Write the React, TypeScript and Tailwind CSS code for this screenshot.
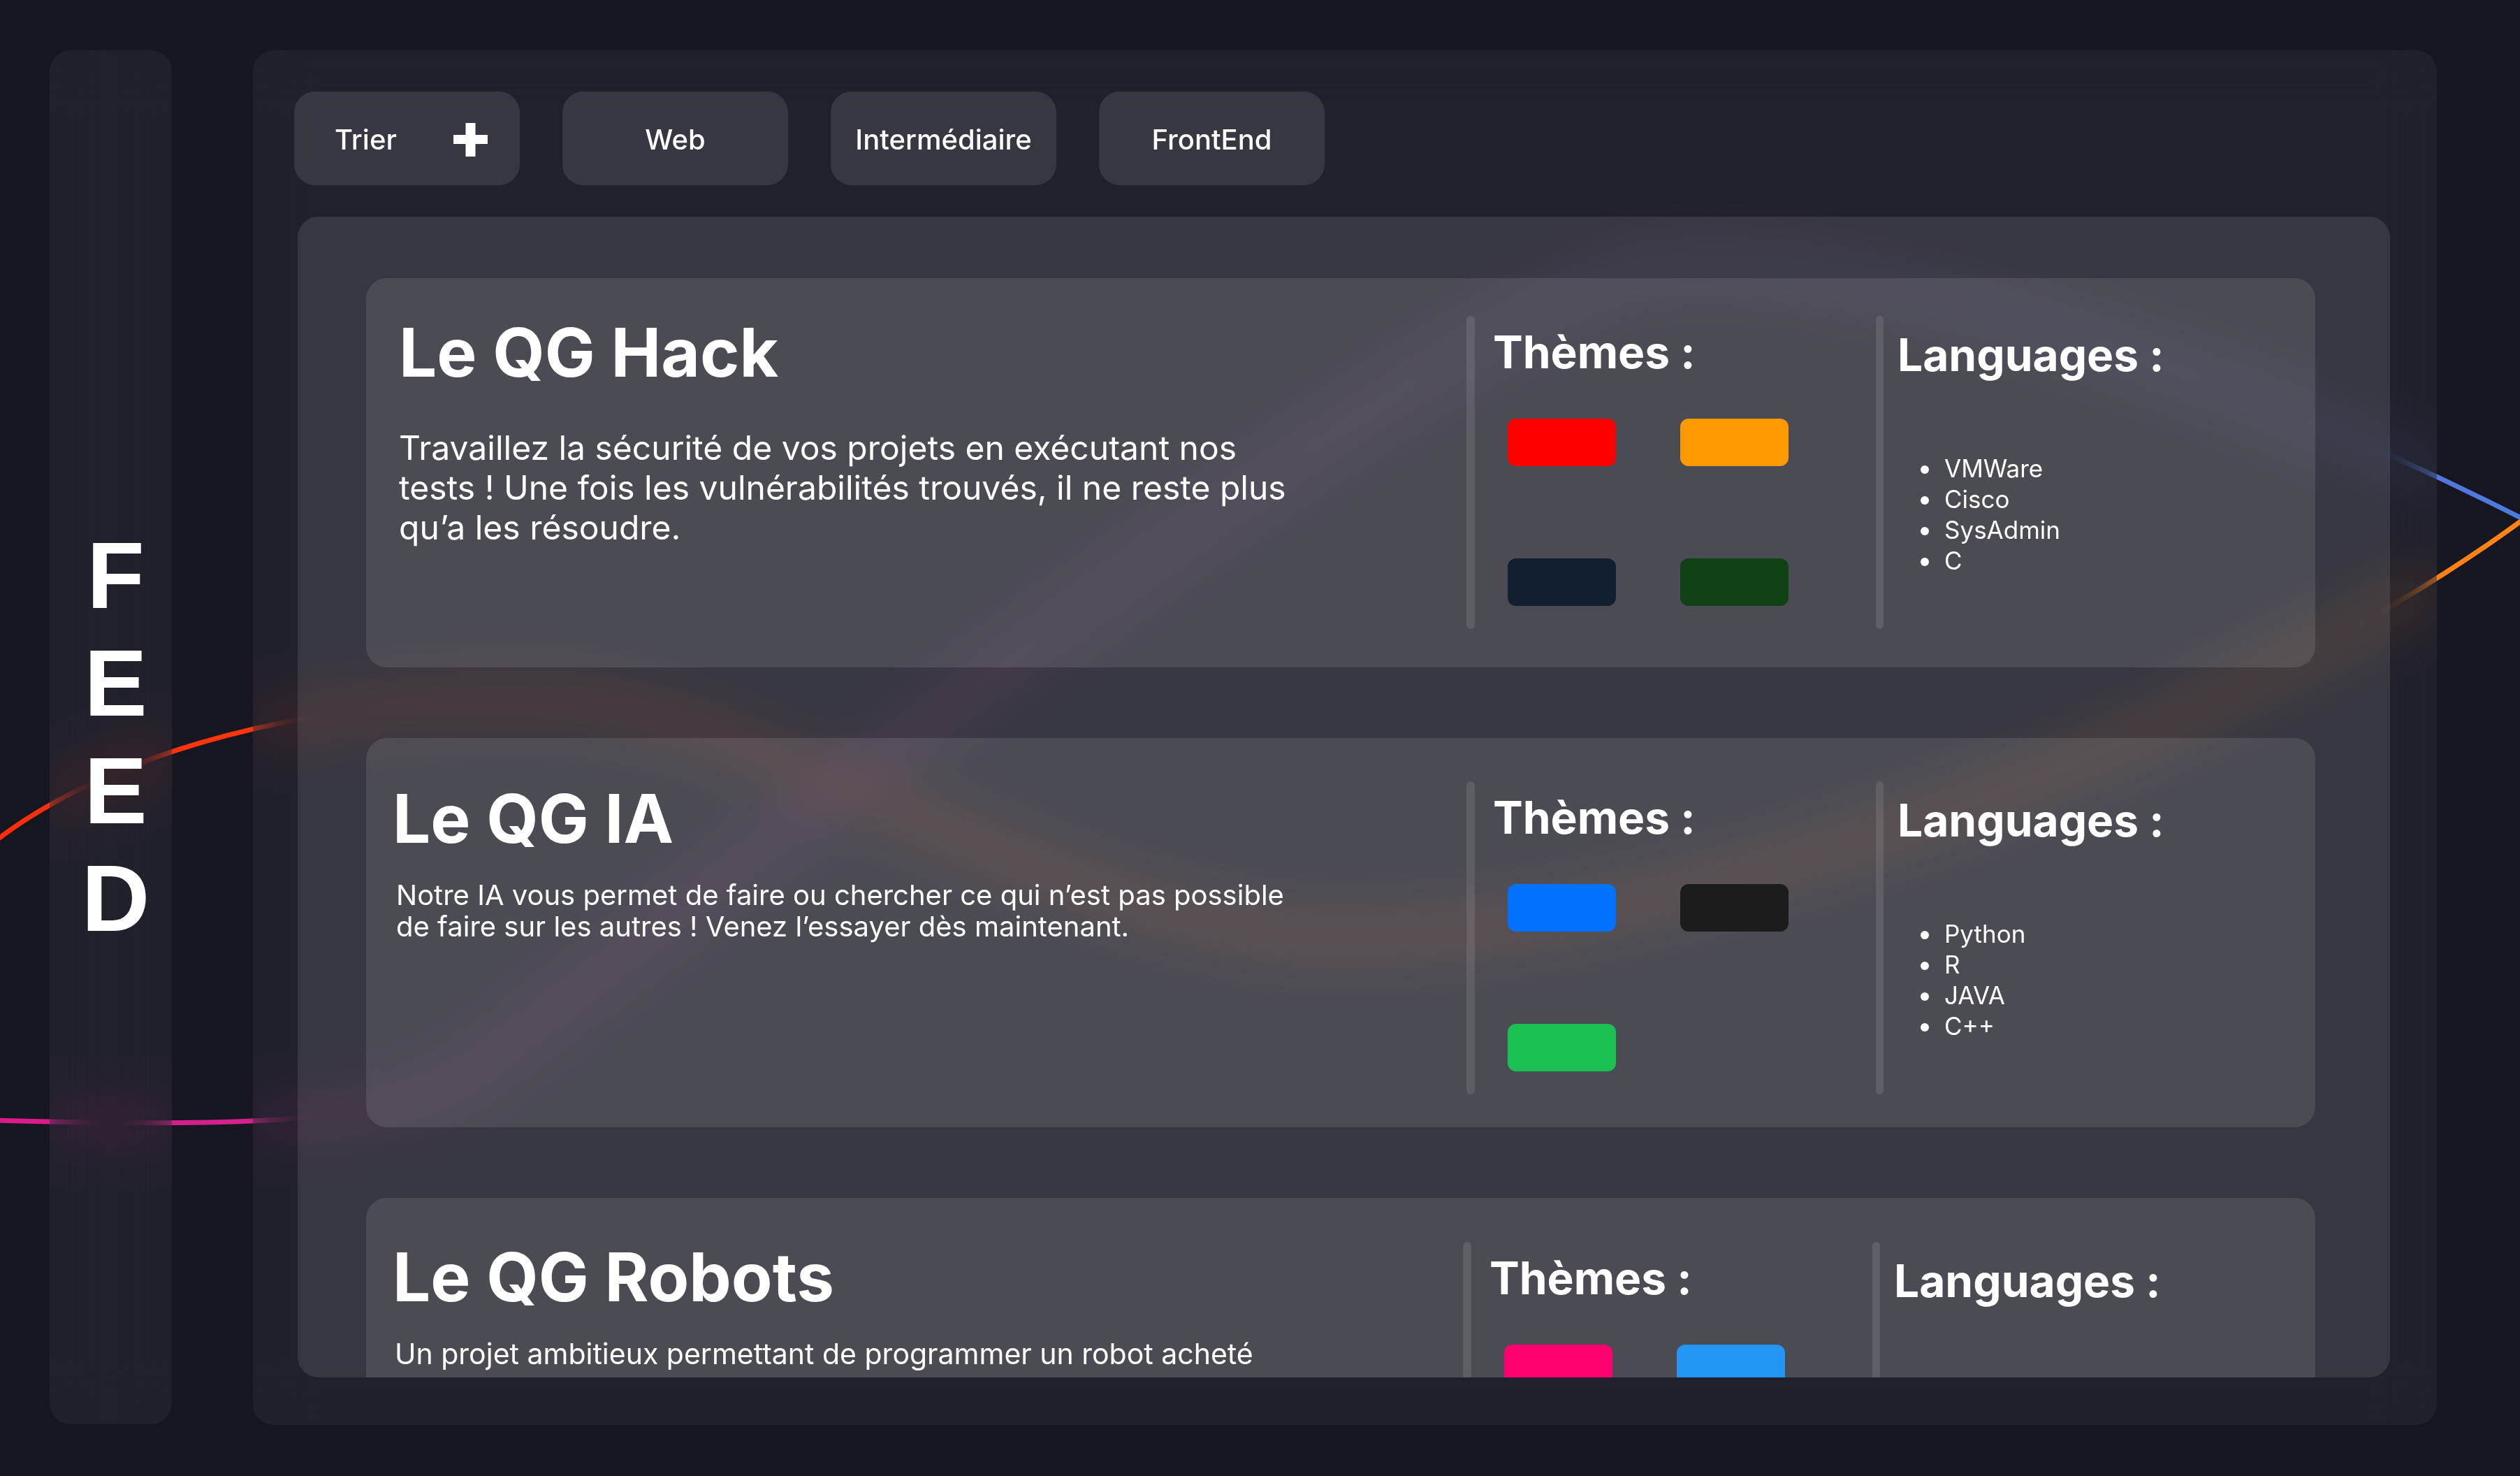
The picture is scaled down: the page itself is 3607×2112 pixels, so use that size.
import React from "react";

type CardData = {
  title: string;
  leftCls: string;
  titleCls: string;
  descCls: string;
  desc: string[];
  rightCls: string;
  swatches: string[];
  langs: string[];
};

const cards: CardData[] = [
  {
    title: "Le QG Hack",
    leftCls: "w-[1575px] pl-[47px] pt-[58px]",
    titleCls: "",
    descCls: "mt-[60px] text-[48px] leading-[57px]",
    desc: [
      "Travaillez la sécurité de vos projets en exécutant nos",
      "tests ! Une fois les vulnérabilités trouvés, il ne reste plus",
      "qu’a les résoudre.",
    ],
    rightCls: "mt-[54px]",
    swatches: ["bg-[#ff0000]", "bg-[#ff9900]", "bg-[#111f31]", "bg-[#0f4114]"],
    langs: ["VMWare", "Cisco", "SysAdmin", "C"],
  },
  {
    title: "Le QG IA",
    leftCls: "w-[1575px] pl-[38px] pt-[67px]",
    titleCls: "",
    descCls: "mt-[39px] ml-[5px] text-[40px] leading-[45px]",
    desc: [
      "Notre IA vous permet de faire ou chercher ce qui n’est pas possible",
      "de faire sur les autres ! Venez l’essayer dès maintenant.",
    ],
    rightCls: "mt-[62px]",
    swatches: ["bg-[#0072ff]", "bg-[#1c1c1c]", "bg-[#1bc152]"],
    langs: ["Python", "R", "JAVA", "C++"],
  },
  {
    title: "Le QG Robots",
    leftCls: "w-[1570px] pl-[38px] pt-[65px]",
    titleCls: "",
    descCls: "mt-[36px] ml-[3px] text-[41px] leading-[52px]",
    desc: [
      "Un projet ambitieux permettant de programmer un robot acheté",
      "ou créé par vos soins, avec une équipe à votre écoute.",
    ],
    rightCls: "mt-[63px]",
    swatches: ["bg-[#ff0070]", "bg-[#2196f3]", "bg-[#8a2be2]"],
    langs: ["Python", "C", "Arduino"],
  },
];

function PlusIcon() {
  return (
    <svg width="49" height="48" viewBox="0 0 49 48" className="shrink-0">
      <rect x="17.5" y="0" width="14" height="48" fill="#ffffff" />
      <rect x="0" y="17" width="49" height="13" fill="#ffffff" />
    </svg>
  );
}

function BackgroundLines() {
  return (
    <svg
      className="absolute left-0 top-0"
      width="3607"
      height="2112"
      viewBox="0 0 3607 2112"
      fill="none"
    >
      <defs>
        <linearGradient id="gOrange" gradientUnits="userSpaceOnUse" x1="0" y1="0" x2="3607" y2="0">
          <stop offset="0" stopColor="#ff2d0a" />
          <stop offset="0.5" stopColor="#ff5a10" />
          <stop offset="1" stopColor="#ff8414" />
        </linearGradient>
        <linearGradient id="gPink" gradientUnits="userSpaceOnUse" x1="0" y1="0" x2="3607" y2="0">
          <stop offset="0" stopColor="#dc1a88" />
          <stop offset="0.4" stopColor="#b5399f" />
          <stop offset="0.65" stopColor="#8a55c4" />
          <stop offset="1" stopColor="#4d7ade" />
        </linearGradient>
      </defs>
      <path
        d="M -10 1206 C 150 1080, 450 990, 800 1005 C 1100 1010, 1500 1330, 1900 1340 C 2400 1350, 3200 1050, 3620 737"
        stroke="url(#gOrange)"
        strokeWidth="7"
      />
      <path
        d="M -10 1603 C 300 1612, 560 1610, 660 1545 C 960 1320, 1900 560, 2300 400 C 2500 320, 3100 480, 3620 747"
        stroke="url(#gPink)"
        strokeWidth="7"
      />
    </svg>
  );
}

function FilterButton({ label }: { label: string }) {
  return (
    <div className="w-[323px] h-[134px] shrink-0 rounded-[30px] bg-white/10 flex items-center justify-center pt-[4px] text-[40px] font-medium">
      {label}
    </div>
  );
}

function Card({ c }: { c: CardData }) {
  return (
    <div className="w-[2790px] h-[557px] shrink-0 rounded-[30px] bg-white/10 flex">
      <div className={`${c.leftCls} shrink-0`}>
        <h2 className={`text-[96px] leading-[96px] font-bold ${c.titleCls}`}>{c.title}</h2>
        <p className={c.descCls}>
          {c.desc.map((line, i) => (
            <React.Fragment key={i}>
              {line}
              {i < c.desc.length - 1 && <br />}
            </React.Fragment>
          ))}
        </p>
      </div>
      <div className={`flex h-[448px] flex-1 ${c.rightCls}`}>
        <div className="w-[12px] h-full shrink-0 rounded-full bg-white/10" />
        <div className="w-[574px] shrink-0 pl-[26px] pt-[20px]">
          <h3 className="text-[64px] leading-[64px] font-bold">Thèmes :</h3>
          <div className="mt-[63px] ml-[21px] grid grid-cols-[155px_155px] gap-x-[92px] gap-y-[132px]">
            {c.swatches.map((s, i) => (
              <div key={i} className={`h-[68px] rounded-[12px] ${s}`} />
            ))}
          </div>
        </div>
        <div className="w-[11px] h-full shrink-0 rounded-full bg-white/10" />
        <div className="flex-1 pl-[20px] pt-[24px]">
          <h3 className="text-[64px] leading-[64px] font-bold">Languages :</h3>
          <ul className="mt-[108px] ml-[33px] text-[35px] leading-[44px]">
            {c.langs.map((l) => (
              <li key={l} className="flex items-center gap-[22px]">
                <span className="w-[12px] h-[12px] shrink-0 rounded-full bg-white mt-[4px]" />
                <span>{l}</span>
              </li>
            ))}
          </ul>
        </div>
      </div>
    </div>
  );
}

export default function App() {
  return (
    <div className="relative w-[3607px] h-[2112px] overflow-hidden bg-[#161621] text-white font-[family-name:Inter,sans-serif]">
      <BackgroundLines />
      <div className="relative flex gap-[116px] pl-[71px] pt-[72px]">
        <aside className="w-[175px] h-[1966px] shrink-0 rounded-[30px] bg-white/5 backdrop-blur-2xl flex items-center justify-center">
          <div className="flex flex-col items-center pl-[14px] font-[family-name:'Liberation_Sans',Arial,sans-serif] text-[135px] leading-[154px] font-bold">
            <span>F</span>
            <span>E</span>
            <span>E</span>
            <span>D</span>
          </div>
        </aside>
        <main className="w-[3126px] h-[1967px] shrink-0 rounded-[30px] bg-white/5 backdrop-blur-2xl pt-[59px] flex flex-col">
          <div className="flex gap-[61px] ml-[59px]">
            <div className="w-[323px] h-[134px] shrink-0 rounded-[30px] bg-white/10 flex items-center justify-between pt-[4px] pl-[58px] pr-[46px] text-[40px] font-medium">
              <span>Trier</span>
              <PlusIcon />
            </div>
            <FilterButton label="Web" />
            <FilterButton label="Intermédiaire" />
            <FilterButton label="FrontEnd" />
          </div>
          <div className="mt-[45px] ml-[64px] w-[2995px] h-[1661px] rounded-[30px] bg-white/10 overflow-hidden pt-[88px] pl-[98px] flex flex-col gap-[101px]">
            {cards.map((c) => (
              <Card key={c.title} c={c} />
            ))}
          </div>
        </main>
      </div>
    </div>
  );
}
